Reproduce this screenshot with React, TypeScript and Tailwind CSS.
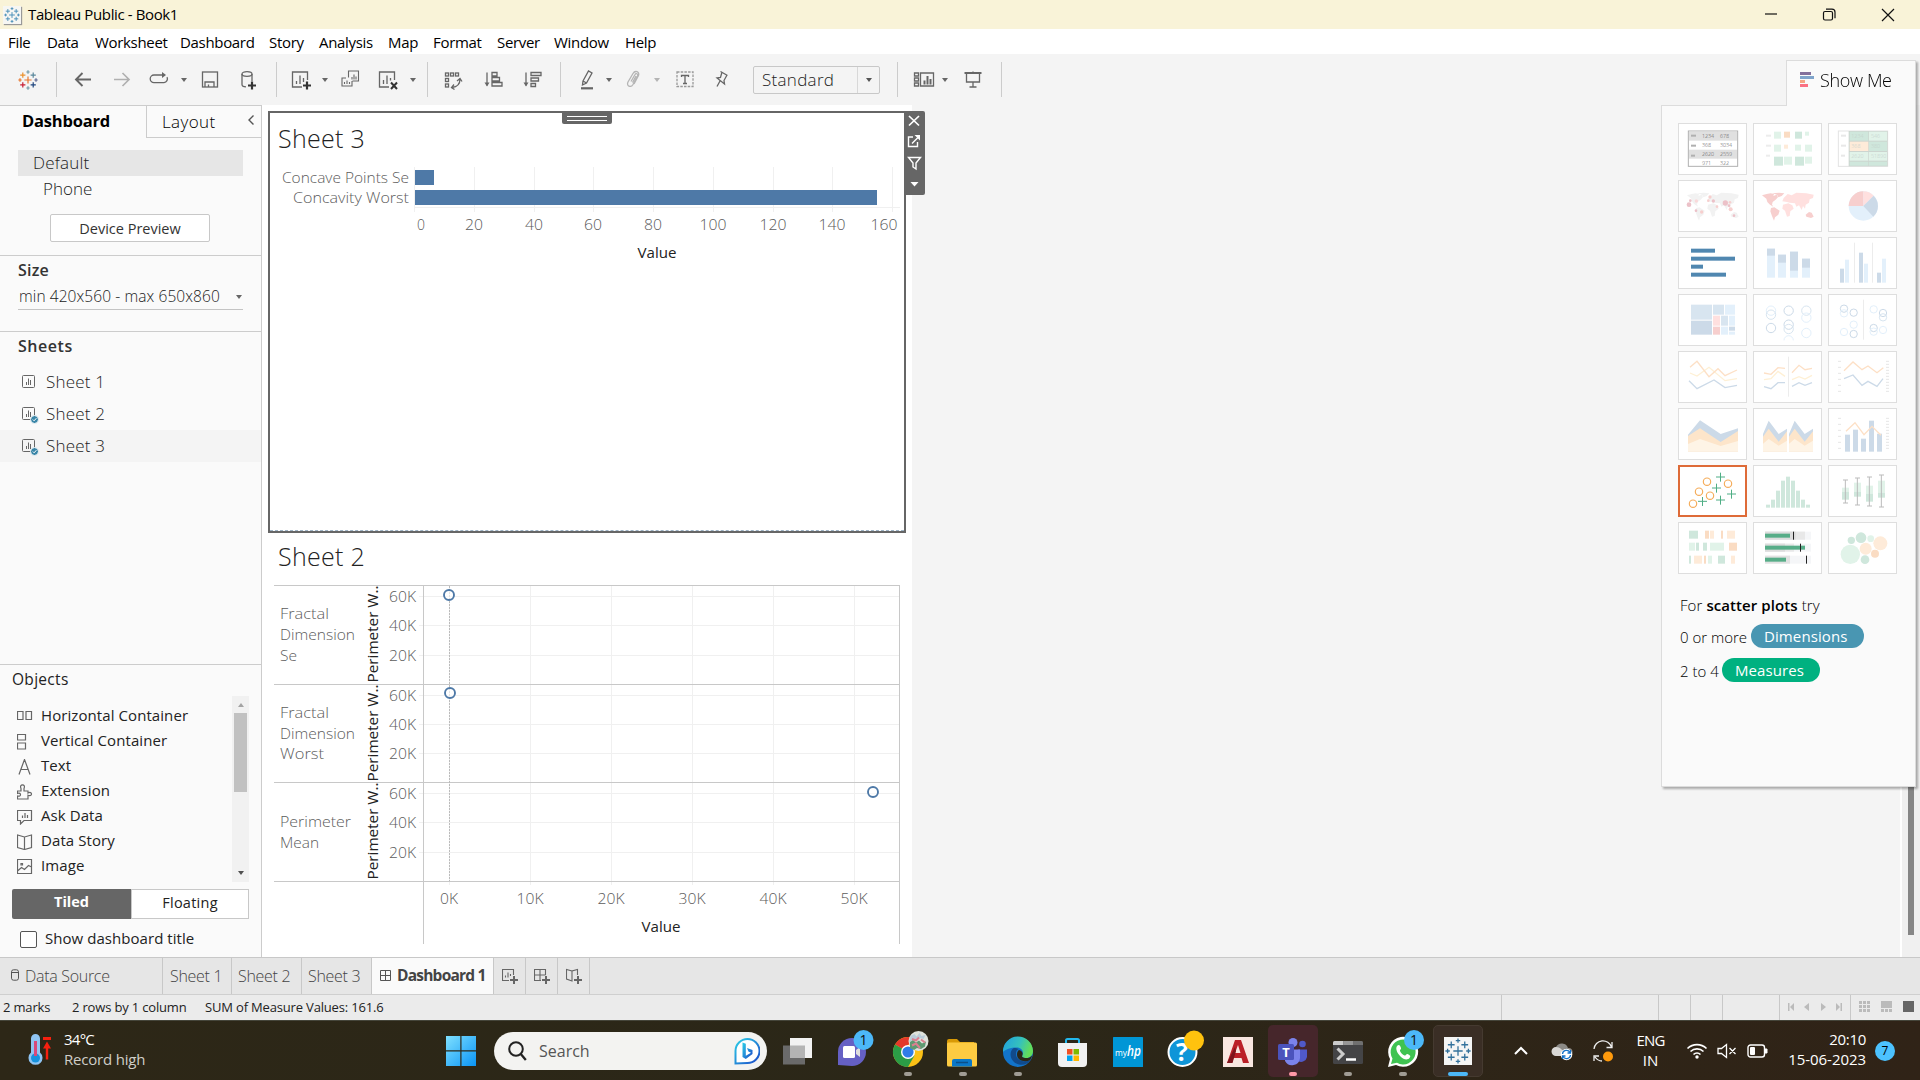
import React from "react";

type P = { children?: React.ReactNode; className?: string };

/* ---------- small shared pieces ---------- */

const Sep = ({ className = "" }: P) => <div className={"h-[35px] w-px shrink-0 bg-[#cccccc] " + className} />;

const Caret = ({ className = "" }: P) => (
  <svg className={"h-[4px] w-[6px] shrink-0 " + className} viewBox="0 0 6 4">
    <path d="M0 0h6L3 4z" fill="currentColor" />
  </svg>
);

const Ico = ({ w = 20, className = "", children }: P & { w?: number }) => (
  <svg
    width={w}
    height={20}
    viewBox={`0 0 ${w} 20`}
    className={"shrink-0 overflow-visible " + className}
    fill="none"
    stroke="#666"
    strokeWidth="1.3"
  >
    {children}
  </svg>
);

const crosses: [number, number, number, string][] = [
  [10, 10, 3.6, "#e8762c"],
  [4.8, 5.2, 2.6, "#eb912c"],
  [15.2, 5.2, 2.6, "#59879b"],
  [4.8, 14.8, 2.6, "#c72035"],
  [15.2, 14.8, 2.6, "#1f457e"],
  [10, 2, 1.7, "#7199a6"],
  [10, 18, 1.7, "#7199a6"],
  [2, 10, 1.7, "#e8762c"],
  [18, 10, 1.7, "#5b6591"],
];

const TableauMark = ({ size, color, className = "" }: { size: number; color?: string; className?: string }) => (
  <svg width={size} height={size} viewBox="0 0 20 20" className={"shrink-0 " + className}>
    {crosses.map(([x, y, r, c], i) => (
      <path key={i} d={`M${x - r} ${y}h${2 * r}M${x} ${y - r}v${2 * r}`} stroke={color || c} strokeWidth="1.2" />
    ))}
  </svg>
);

/* ---------- title, menu, toolbar ---------- */

const TitleBar = () => (
  <div className="flex h-[29px] items-center bg-[#f9f3d8] pl-[3px] font-['Open_Sans',sans-serif] text-[15px] text-black">
    <div className="flex h-[18px] w-[18px] items-center justify-center bg-[#f6f6f3] shadow-[1px_1px_1px_#999]">
      <TableauMark size={16} color="#4a8fb8" />
    </div>
    <span className="ml-[7px] pb-px tracking-[-0.38px]">Tableau Public - Book1</span>
    <svg className="ml-auto mr-[24px] h-[14px] w-[132px]" viewBox="0 0 132 14" fill="none" stroke="#111" strokeWidth="1.2">
      <path d="M1 6h12" />
      <rect x="59.500" y="3.500" width="9" height="8.500" rx="1.500" />
      <path d="M62 1.200h6a3 3 0 0 1 3 3v6" />
      <path d="M118 1l12 12M130 1l-12 12" />
    </svg>
  </div>
);

const MenuBar = () => (
  <div className="flex h-[25px] items-center bg-white pl-[8px] pt-[2px] font-['Open_Sans',sans-serif] text-[15px] tracking-[-0.32px] text-black">
    <span className="w-[39px]">File</span>
    <span className="w-[48px]">Data</span>
    <span className="w-[85px]">Worksheet</span>
    <span className="w-[89px]">Dashboard</span>
    <span className="w-[50px]">Story</span>
    <span className="w-[69px]">Analysis</span>
    <span className="w-[45px]">Map</span>
    <span className="w-[64px]">Format</span>
    <span className="w-[57px]">Server</span>
    <span className="w-[71px]">Window</span>
    <span>Help</span>
  </div>
);

const Toolbar = () => (
  <div className="flex h-[51px] items-center bg-[#f4f4f4] text-[#666]">
    <TableauMark size={20} className="ml-[18px]" />
    <Sep className="ml-[18px]" />
    <Ico w={18} className="ml-[17px]">
      <path d="M17 9.500H2M8.500 3L2 9.500l6.500 6.500" strokeWidth="1.9" />
    </Ico>
    <Ico w={18} className="ml-[21px]">
      <path d="M1 9.500h15M9.500 3L16 9.500l-6.500 6.500" strokeWidth="1.700" stroke="#b0b0b0" />
    </Ico>
    <Ico className="ml-[18px]">
      <path d="M14 5H5a3.800 3.800 0 0 0 0 7.600h10a3.800 3.800 0 0 0 3-5.500" />
      <path d="M13 2l4 3-4 3z" fill="#666" stroke="none" />
    </Ico>
    <Caret className="ml-[12px]" />
    <Ico w={18} className="ml-[14px]">
      <rect x="1.500" y="2" width="15" height="15" />
      <path d="M4 17v-5h9v5M7.500 17v-2.500" />
    </Ico>
    <Ico w={18} className="ml-[20px]">
      <ellipse cx="8" cy="4" rx="5" ry="2.300" />
      <path d="M3 4v10.500c0 1.500 2 2.300 4 2.400M13 4v7" />
      <path d="M9 15.500h8M13 11.500v8" stroke="#333" strokeWidth="2.200" />
    </Ico>
    <Sep className="ml-[19px]" />
    <Ico className="ml-[14px]">
      <path d="M16.500 10V2h-15v15H11M5.500 14v-3M9 14V5.500M12.500 12V8" />
      <path d="M12 15.500h8M16 11.500v8" stroke="#333" strokeWidth="2.200" />
    </Ico>
    <Caret className="ml-[11px]" />
    <Ico className="ml-[12px]">
      <path d="M8.500 7.500V1h10v10h-6M12 9.500V7M14 9.500V4.500M16 9.500V6.500M6 8H2v8h10v-5M4.500 14v-2M7 14v-3.500M9.500 14v-2" strokeWidth="1.100" />
    </Ico>
    <Ico className="ml-[18px]">
      <path d="M16.500 10V2h-15v15H11M5.500 14v-4M9 14V5.500M12.500 10.500V8" />
      <path d="M13 12.500l6 6.500M19 12.500L13 19" stroke="#333" strokeWidth="2" />
    </Ico>
    <Caret className="ml-[12px]" />
    <Sep className="ml-[11px]" />
    <Ico className="ml-[15px]">
      <rect x="2.500" y="3" width="3" height="3" />
      <rect x="7.500" y="3" width="3" height="3" />
      <rect x="12.500" y="3" width="3" height="3" />
      <rect x="2.500" y="8.500" width="3" height="3" />
      <rect x="2.500" y="14" width="3" height="3" />
      <path d="M17 9c0 5-3 8-8 8.500M14 11l3-2.500 2 3M11 14.500l-2.500 3 3 2" />
    </Ico>
    <Ico className="ml-[20px]">
      <path d="M4 2.500v13" />
      <path d="M1.500 12.500L4 16.500l2.500-4z" fill="#666" stroke="none" />
      <path d="M9 2.500h5V6H9zM9 7.500h7.500V11H9zM9 12.500h10V16H9z" />
    </Ico>
    <Ico className="ml-[19px]">
      <path d="M4 2.500v13" />
      <path d="M1.500 12.500L4 16.500l2.500-4z" fill="#666" stroke="none" />
      <path d="M9 2.500h10v3H9zM9 8h7.500v3H9zM9 13.500h4.500v3H9z" />
    </Ico>
    <Sep className="ml-[18px]" />
    <Ico w={14} className="ml-[19px]">
      <path d="M3 11l5.500-10L12 3l-5.500 10-4 2zM3 11l3.500 2" />
      <path d="M1 18.300h12" strokeWidth="2.200" />
    </Ico>
    <Caret className="ml-[12px]" />
    <Ico w={14} className="ml-[14px]">
      <path
        d="M5 11.500l4-7c1-2 3.500-.5 2.500 1.500L7 14.500c-2 3.500-7 1.500-5-2.500L7 3.500c2-3.500 7-2 5.500 2L8 14M6.500 12.500L10 6"
        stroke="#b4b4b4"
      />
    </Ico>
    <Caret className="ml-[14px] text-[#b4b4b4]" />
    <Ico w={18} className="ml-[16px]">
      <rect x="1" y="2" width="16" height="14.500" stroke="#999" strokeDasharray="2.500 1.200" />
      <path d="M5.500 7V5.500h7V7M9 5.500v8M7 13.500h4" />
    </Ico>
    <Ico w={14} className="ml-[21px]">
      <path d="M5.500 1.500l7 4M7 2L5.500 7.500 2 8l7.500 6L9 10.500 12 5M5 11l-3 5.500" />
    </Ico>
    <div className="ml-[24px] flex h-[28px] w-[127px] shrink-0 items-center rounded-[2px] border border-[#c8c8c8] pl-[8px] font-['Open_Sans',sans-serif] text-[17px] font-light text-[#222]">
      <span className="w-[95px] tracking-[0.3px]">Standard</span>
      <div className="flex h-full flex-1 items-center justify-center border-l border-[#d8d8d8]">
        <Caret className="text-[#555]" />
      </div>
    </div>
    <Sep className="ml-[17px]" />
    <Ico className="ml-[16px]">
      <path d="M.500 3h4v3h-4zM.500 8h4v3h-4zM.500 13h4v3h-4zM6.500 3h13v13h-13z" />
      <path d="M10.500 14.500v-4M13.500 14.500V6M16.500 14.500V9" strokeWidth="2" />
    </Ico>
    <Caret className="ml-[8px]" />
    <Ico w={18} className="ml-[16px]">
      <path d="M.500 3h17" strokeWidth="2" />
      <path d="M2.500 3.500V12h13V3.500M9 1.500v1M9 12v4.500M5.500 17h7" />
    </Ico>
    <Sep className="ml-[19px]" />
  </div>
);

/* ---------- left panel ---------- */

const SheetItem = ({ name, used, active }: { name: string; used?: boolean; active?: boolean }) => (
  <div className={"flex h-[32px] items-center pl-[22px] " + (active ? "bg-[#f4f4f4]" : "")}>
    <svg width="16" height="16" viewBox="0 0 16 16" fill="none" stroke="#666" className="overflow-visible">
      <rect x=".500" y="1.500" width="12" height="12" rx="1" />
      <path d="M4.500 11V8M6.500 11V4.500M8.500 11V6" />
      {used && (
        <>
          <circle cx="12.500" cy="13.500" r="4" fill="#3a86a8" stroke="#fafafa" />
          <path d="M10.800 13.500l1.300 1.300 2.300-2.600" stroke="#fff" />
        </>
      )}
    </svg>
    <span className="ml-[8px] text-[17px] font-light tracking-[0.2px]">{name}</span>
  </div>
);

const objects: [string, React.ReactNode][] = [
  ["Horizontal Container", <path d="M.500 2.500h5.500v8H.500zM9 2.500h5.500v8H9z" />],
  ["Vertical Container", <path d="M.500.500h8v5.500h-8zM.500 9h8v6h-8z" />],
  ["Text", <path d="M2 15.500L7.500.500 13 15.500M4 10.500h7" />],
  ["Extension", <path d="M.500 7h3.500V4.500C3 2 4 .800 5.500.800S8 2 7 4.500V7h4v2c2-1 3.500-.500 3.500 1s-1.500 2-3.500 1.200V15H.500v-3c2 .600 3-.200 3-1.300s-1-2-3-1.200z" />],
  ["Ask Data", <path d="M.500 1.500h14v10H7l-3.500 3.500v-3.500h-3zM5.500 9V6.500M8 9V4M10.500 9V6" />],
  ["Data Story", <path d="M7.500 3L.500 1v12.500l7 2 7-2V1zM7.500 3v12.500" />],
  ["Image", <path d="M.500.500h14v14H.500zM.500 12l4-3.500 3 2 4-4 3 1.500M4 4.500h1.500V6H4z" />],
];

const LeftPanel = () => (
  <aside className="flex w-[262px] shrink-0 flex-col border-r border-t border-[#cccccc] bg-[#fafafa] font-['Open_Sans',sans-serif] text-[#222]">
    <div className="flex h-[32px] text-[17px] text-black">
      <div className="w-[146px] pl-[22px] pt-[2px] text-[16.500px] font-bold leading-[25px] tracking-[-0.2px]">Dashboard</div>
      <div className="flex flex-1 items-center border-b border-l border-[#cccccc] pl-[15px] font-light">
        <span className="tracking-[0.4px]">Layout</span>
        <svg className="mb-[3px] ml-auto mr-[7px] h-[10px] w-[6px]" viewBox="0 0 6 10" fill="none" stroke="#555" strokeWidth="1.400">
          <path d="M5.500.500L1 5l4.500 4.500" />
        </svg>
      </div>
    </div>
    <div className="mx-[18px] mt-[12px] flex h-[26px] items-center bg-[#e6e6e6] pl-[15px] text-[17px] font-light tracking-[0.2px]">Default</div>
    <div className="flex h-[26px] items-center pl-[43px] text-[17px] font-light">Phone</div>
    <div className="ml-[50px] mt-[12px] flex h-[28px] w-[160px] items-center justify-center rounded-[2px] border border-[#c8c8c8] bg-white pt-px text-[14.500px] text-[#333]">
      Device Preview
    </div>
    <div className="mt-[13px] h-[76px] border-t border-[#cccccc] px-[18px]">
      <div className="mt-[2px] text-[16px] font-semibold leading-[24px] tracking-[0.2px] text-[#333]">Size</div>
      <div className="mt-[2px] flex h-[26px] items-center border-b border-[#c4c4c4] pl-px text-[15.500px] font-light tracking-[0.09px]">
        min 420x560 - max 650x860
        <Caret className="ml-auto mr-[1px] text-[#666]" />
      </div>
    </div>
    <div className="flex-1 border-t border-[#cccccc]">
      <div className="ml-[18px] mt-[2px] text-[16px] font-semibold leading-[24px] tracking-[0.55px] text-[#333]">Sheets</div>
      <div className="mt-[8px]">
        <SheetItem name="Sheet 1" />
        <SheetItem name="Sheet 2" used />
        <SheetItem name="Sheet 3" used active />
      </div>
    </div>
    <div className="h-[293px] border-t border-[#cccccc]">
      <div className="ml-[12px] mt-[2px] text-[15.500px] leading-[24px] tracking-[0.3px] text-[#222]">Objects</div>
      <div className="mt-[5px] flex h-[186px] pl-[17px] pr-[12px]">
        <div className="flex-1 pt-[7px]">
          {objects.map(([n, icon]) => (
            <div key={n} className="flex h-[25px] items-center text-[15px] tracking-[0.08px] text-[#222]">
              <svg width="16" height="16" viewBox="0 0 16 16" fill="none" stroke="#666" strokeWidth="1.200" className="relative top-px">
                {icon}
              </svg>
              <span className="ml-[8px]">{n}</span>
            </div>
          ))}
        </div>
        <div className="flex w-[17px] flex-col items-center bg-[#f1f1f1]">
          <Caret className="mt-[7px] rotate-180 text-[#a3a3a3]" />
          <div className="mt-[6px] h-[79px] w-[13px] bg-[#c1c1c1]" />
          <Caret className="mb-[7px] mt-auto text-[#505050]" />
        </div>
      </div>
      <div className="ml-[12px] mt-[7px] flex h-[30px] w-[237px] text-center text-[14.500px] leading-[26px]">
        <div className="w-[119px] rounded-l-[2px] bg-[#666] font-bold text-white">Tiled</div>
        <div className="flex-1 border border-[#c8c8c8] bg-white tracking-[0.25px] text-[#222]">Floating</div>
      </div>
      <div className="ml-[20px] mt-[10px] flex items-center text-[15px] leading-[18px] text-[#222]">
        <div className="mr-[8px] h-[17px] w-[17px] rounded-[2px] border border-[#555] bg-white" />
        <span className="pb-[2px] tracking-[0.05px]">Show dashboard title</span>
      </div>
    </div>
  </aside>
);

/* ---------- dashboard canvas ---------- */

const Txt = ({
  x, y, w, s = 15, fill = "#5c5c5c", anchor = "middle", weight = 300, children,
}: {
  x: number; y: number; w: number; s?: number; fill?: string; anchor?: "start" | "middle" | "end"; weight?: number; children: string;
}) => (
  <text
    x={x}
    y={y}
    fontSize={s}
    fill={fill}
    textAnchor={anchor}
    fontWeight={weight}
    textLength={w}
    lengthAdjust="spacingAndGlyphs"
    fontFamily="'Open Sans', sans-serif"
  >
    {children}
  </text>
);

const barTicks: [string, number, number, number][] = [
  ["0", 414.5, 421, 8],
  ["20", 474.5, 474, 18],
  ["40", 534.5, 534, 18],
  ["60", 593.5, 593, 18],
  ["80", 653.5, 653, 18],
  ["100", 713.5, 713, 27],
  ["120", 773.5, 773, 27],
  ["140", 832.5, 832, 27],
  ["160", 892.5, 884, 27],
];

const BarChart = () => (
  <svg width="634" height="110" viewBox="270 160 634 110" className="block">
    {barTicks.map(([t, gx, tx, w]) => (
      <g key={t}>
        <path d={`M${gx} 167v45`} stroke="#f0f0f0" />
        <Txt x={tx} y={230} w={w}>{t}</Txt>
      </g>
    ))}
    <path d="M415 207.500h485" stroke="#f0f0f0" />
    <path d="M415 170h19v15h-19zM415 190h462v15H415z" fill="#4e79a7" />
    <Txt x={409} y={183} w={127} anchor="end">Concave Points Se</Txt>
    <Txt x={409} y={203} w={116} anchor="end">Concavity Worst</Txt>
    <Txt x={657} y={258} w={39} weight={400} fill="#222">Value</Txt>
  </svg>
);

const rows = [
  { top: 585.5, grid: [596.5, 625.5, 655.5], lines: ["Fractal", "Dimension", "Se"], ys: [619, 640, 661], ws: [49, 75, 17], dot: [448.5, 595] },
  { top: 684.5, grid: [695.5, 724.5, 753.5], lines: ["Fractal", "Dimension", "Worst"], ys: [718, 739, 759], ws: [49, 75, 44], dot: [449.5, 693] },
  { top: 782.5, grid: [793.5, 822.5, 852.5], lines: ["Perimeter", "Mean"], ys: [827, 848], ws: [71, 39], dot: [872.5, 792] },
];

const ScatterChart = () => (
  <svg width="640" height="370" viewBox="270 580 640 370" className="block">
    {[449.5, 530.5, 611.5, 692.5, 773.5, 854.5].map((x, i) => (
      <g key={x}>
        <path d={`M${x} 586v299`} stroke="#f0f0f0" />
        <Txt x={x - 0.5} y={904} w={i ? 27 : 18}>{(i ? i * 10 : 0) + "K"}</Txt>
      </g>
    ))}
    {rows.map((r) => (
      <g key={r.top}>
        {r.grid.map((y, i) => (
          <g key={y}>
            <path d={`M419 ${y}h480`} stroke="#f0f0f0" />
            <Txt x={416} y={y + 5.5} w={27} anchor="end">{["60K", "40K", "20K"][i]}</Txt>
          </g>
        ))}
        {r.lines.map((l, i) => (
          <Txt key={l} x={280} y={r.ys[i]} w={r.ws[i]} anchor="start">{l}</Txt>
        ))}
        <g transform={`translate(377.500 ${r.top + 97}) rotate(-90)`}>
          <Txt x={0} y={0} w={97} anchor="start" weight={400} fill="#222">Perimeter W..</Txt>
        </g>
        <path d={`M274 ${r.top}h626`} stroke="#c8c8c8" />
      </g>
    ))}
    <path d="M449.500 586v295" stroke="#bbb" strokeDasharray="2 1" />
    <path d="M274 881.500h626M423.500 585v359M899.500 585v359" stroke="#c8c8c8" />
    {rows.map((r) => (
      <circle key={r.top} cx={r.dot[0] + 0.5} cy={r.dot[1]} r="5" fill="#fff" fillOpacity=".6" stroke="#4e79a7" strokeWidth="1.900" />
    ))}
    <Txt x={661} y={932} w={39} weight={400} fill="#222">Value</Txt>
  </svg>
);

const SheetTitle = ({ children, className = "" }: P) => (
  <div className={"font-['Open_Sans',sans-serif] text-[25px] font-light leading-[34px] text-[#222] " + className}>{children}</div>
);

const Canvas = () => (
  <main className="w-[650px] shrink-0 bg-white pl-[6px] pt-[6px]">
    <section className="relative h-[422px] w-[638px] border-2 border-[#666]">
      <SheetTitle className="pl-[8px] pt-[8px] tracking-[0.3px]">Sheet 3</SheetTitle>
      <div className="mt-[5px]">
        <BarChart />
      </div>
      <div className="absolute bottom-0 left-0 right-0 border-b border-dashed border-[#9fb4c6]" />
      <div className="absolute left-[292px] top-0 flex h-[11px] w-[50px] flex-col gap-[3px] rounded-b-[2px] bg-[#666] px-[5px] pt-[3px]">
        <div className="h-px bg-white" />
        <div className="h-px bg-white" />
      </div>
      <svg className="absolute -top-[2px] left-[634px] h-[84px] w-[21px] rounded-r-[2px] bg-[#666]" viewBox="0 0 21 84" fill="none" stroke="#fff" strokeWidth="1.400">
        <path d="M5 5l10 9.500M15 5L5 14.500" strokeWidth="1.700" />
        <path d="M9 26H4.500v9.500h9V31M8 32.500l6-6" />
        <path d="M10.500 24H16v5.500z" fill="#fff" stroke="none" />
        <path d="M4.500 46.500h12l-4.500 5.500v6l-3-2v-4z" />
        <path d="M6.500 71h8l-4 4.500z" fill="#fff" stroke="none" />
      </svg>
    </section>
    <section className="pl-[2px]">
      <SheetTitle className="pl-[8px] pt-[6px] tracking-[0.3px]">Sheet 2</SheetTitle>
      <div className="mt-[7px]">
        <ScatterChart />
      </div>
    </section>
  </main>
);

/* ---------- Show Me gallery ---------- */

const G1 = "#cfe7dc", G2 = "#e1f3e9", O1 = "#fadcc3", O2 = "#feebd9", B1 = "#ccdae8", B2 = "#e3f0fb", B3 = "#d8e5f0", R1 = "#f7cfce", R2 = "#ffe0df", YL = "#fef0d5";

const R = ({ d }: { d: [number, number, number, number, string][] }) => (
  <>
    {d.map(([x, y, w, h, c], i) => (
      <rect key={i} x={x} y={y} width={w} height={h} fill={c} />
    ))}
  </>
);
const C = ({ d, sw }: { d: [number, number, number, string][]; sw?: number }) => (
  <>
    {d.map(([x, y, r, c], i) => (
      <circle key={i} cx={x} cy={y} r={r} fill={sw ? "none" : c} stroke={sw ? c : "none"} strokeWidth={sw} />
    ))}
  </>
);
const L = ({ p, c, sw = 4 }: { p: string; c: string; sw?: number }) => <polyline points={p} fill="none" stroke={c} strokeWidth={sw} />;

const Tiny = ({ x, y, c, t }: { x: number; y: number; c: string; t: string }) => (
  <text x={x} y={y} fontSize="16" fill={c} fontFamily="'Open Sans', sans-serif">{t}</text>
);

const Land = ({ a, b }: { a: string; b: string }) => (
  <>
    <path
      fill={a}
      d="M27 46l14-4 12-2 10 2-2 6 10-4 4 8-8 8-8 6-2 8 4 6-10-6-8-8-3-10zM58 40l20-2 16 2-8 8-10 4-4-8zM54 84l10-2 16 10-4 12-10 8-3 10-6-14-5-14zM158 104l10-8 8 2 6 12-8 4-14-4z"
    />
    <path
      fill={b}
      d="M88 64l4-10 12-12 12 4 14-8 30 2 22 4-2 10-10 4-2 10-10 6-2 12-6-8-4 12-8-14-8 4-4-10-16-2-8-2zM90 74l16-4 12 6 4 10-10 8-2 14-8 2-6-18-8-6z"
    />
  </>
);

const areas = (dx: number, k: number) => (
  <g transform={`translate(${dx} 0)`}>
    <path d={k ? "M30 78L47 38l30 40 25-16v69H30z" : "M30 80l36-43 62 41 52-17v70H30z"} fill={B1} />
    <path d={k ? "M30 86l17-24 30 39 25-31v61H30z" : "M30 84l36-23 62 41 52-33v62H30z"} fill="#fde5ca" />
    <path d={k ? "M30 107l17-14 30 20 25-15v33H30z" : "M30 108l36-15 62 21 52-15v32H30z"} fill="#fef4e6" />
  </g>
);

const ticks = (x: number, step: number) =>
  Array.from({ length: 90 / step + 1 }, (_, i) => <path key={i} d={`M${x} ${31 + i * step}h9`} stroke="#e6e6e6" strokeWidth="3" />);

const thumbs: React.ReactNode[] = [
  <>
    <rect x="31" y="24" width="148" height="106" fill="#fff" stroke="#b0b0b0" strokeWidth="3" />
    <R d={[[33, 26, 144, 27, "#e0e0e0"], [33, 80, 144, 27, "#e0e0e0"], [39, 35, 15, 6, "#b0b0b0"], [39, 65, 15, 6, "#b0b0b0"], [39, 95, 12, 6, "#b0b0b0"]]} />
    {[["1234", "678"], ["368", "3034"], ["2620", "2559"], ["971", "322"]].map(([a, b], i) => (
      <g key={a}>
        <Tiny x={72} y={45 + i * 26.500} c="#555" t={a} />
        <Tiny x={126} y={45 + i * 26.500} c="#555" t={b} />
      </g>
    ))}
  </>,
  <R d={[[39, 35, 15, 6, "#ececec"], [39, 65, 15, 6, "#ececec"], [39, 95, 12, 6, "#ececec"], [63, 26, 21, 21, G2], [93, 26, 18, 18, O1], [126, 26, 21, 21, G1], [156, 26, 12, 12, G2], [63, 65, 21, 21, G2], [93, 65, 12, 12, O2], [126, 65, 18, 18, G2], [156, 65, 21, 21, G2], [63, 101, 27, 27, G1], [93, 101, 24, 24, G2], [126, 101, 27, 27, G1], [156, 101, 21, 21, G2]]} />,
  <>
    <rect x="31" y="24" width="148" height="106" fill="#fff" stroke="#e3e3e3" strokeWidth="3" />
    <R d={[[62, 24, 117, 106, "#ccd5d0"], [65, 26, 56, 27, G1], [123, 26, 54, 27, G2], [65, 56, 56, 28, O2], [123, 56, 54, 28, G1], [65, 87, 56, 26, G2], [123, 87, 54, 26, G2], [65, 116, 56, 12, G1], [123, 116, 54, 12, G1], [39, 35, 15, 6, "#e8e8e8"], [39, 65, 15, 6, "#e8e8e8"], [39, 95, 12, 6, "#e8e8e8"]]} />
    {[["1234", "546"], ["368", "380"], ["2620", "51890"]].map(([a, b], i) => (
      <g key={a}>
        <Tiny x={70} y={45 + i * 30} c="#c3cfc9" t={a} />
        <Tiny x={129} y={45 + i * 30} c="#c3cfc9" t={b} />
      </g>
    ))}
  </>,
  <>
    <Land a="#f2f2f2" b="#f2f2f2" />
    <C d={[[33, 74, 7, "#ecc1c8"], [37, 62, 4, "#ecc1c8"], [55, 63, 5, "#fad9da"], [96, 51, 5, R1], [91, 62, 4, R1], [106, 63, 5, "#ecc1c8"], [117, 80, 4, R1], [142, 69, 8, "#ecc1c8"], [156, 67, 4, R1], [153, 77, 4, "#ecc1c8"], [158, 88, 6, R1], [54, 92, 4, "#ecc1c8"], [71, 96, 5, R1], [168, 107, 4, "#ecc1c8"]]} />
  </>,
  <Land a={R1} b={R2} />,
  <>
    <circle cx="106" cy="78" r="44" fill={B2} />
    <path d="M106 78H62a44 44 0 0 1 44-44z" fill={R1} />
    <path d="M106 78V34a44 44 0 0 1 31 13z" fill={R2} />
    <path d="M106 78l31-31a44 44 0 0 1-1 63z" fill={B1} />
  </>,
  <R d={[[39, 35, 72, 12, "#5087b0"], [39, 59, 132, 12, "#5087b0"], [39, 83, 36, 12, "#5087b0"], [39, 107, 105, 12, "#5087b0"]]} />,
  <R d={[[42, 35, 24, 87, B2], [42, 35, 24, 21, B1], [75, 53, 24, 69, B2], [75, 53, 24, 24, B1], [111, 44, 24, 78, B2], [111, 44, 24, 57, B1], [147, 65, 24, 57, B2], [147, 65, 24, 27, B1]]} />,
  <R d={[[36, 95, 12, 42, B1], [51, 68, 12, 69, B2], [78, 17, 3, 120, "#ececec"], [93, 47, 12, 90, B1], [108, 80, 12, 57, B2], [132, 17, 3, 120, "#ececec"], [147, 107, 12, 30, B1], [162, 65, 12, 72, B2]]} />,
  <R d={[[39, 32, 63, 45, B3], [39, 80, 63, 42, B1], [105, 32, 33, 30, B3], [141, 32, 30, 30, B2], [105, 65, 21, 30, R2], [129, 65, 21, 30, B3], [153, 65, 18, 30, B2], [105, 98, 21, 24, R1], [129, 98, 21, 24, B2], [153, 98, 18, 12, B1], [153, 113, 18, 9, B2]]} />,
  <>
    <C sw={3} d={[[54, 50, 14, B2], [54, 62, 14, B3], [54, 102, 14, B1], [107, 50, 14, B1], [107, 92, 14, B1], [107, 105, 14, B3], [160, 50, 14, B3], [160, 71, 14, B2], [160, 117, 14, B2]]} />
    <path d="M93 139a14 14 0 0 1 28 0" fill="none" stroke={B2} strokeWidth="3" />
  </>,
  <>
    <C sw={3} d={[[48, 44, 11, B1], [48, 58, 11, B2], [77, 56, 11, B1], [77, 92, 11, B2], [48, 114, 11, B2], [77, 120, 11, B1], [137, 46, 11, B2], [165, 57, 11, B1], [165, 70, 11, B3], [137, 102, 11, B1], [137, 113, 11, B2], [165, 108, 11, B2]]} />
    <R d={[[105, 17, 3, 120, "#ececec"]]} />
  </>,
  <>
    <L c={YL} p="36,66 57,75 93,49 141,89 177,83" />
    <L c="#fde0c6" p="36,49 57,31 93,77 120,53 141,74 177,57" />
    <L c={B1} p="33,89 57,113 108,87 141,110 177,103" />
  </>,
  <>
    <L c="#fde0c6" p="33,66 54,70 75,50 96,52" />
    <L c={YL} p="33,86 54,83 75,61 96,76" />
    <L c={B1} p="33,107 54,113 75,95 96,95" />
    <R d={[[105, 17, 3, 120, "#ececec"]]} />
    <L c="#fde0c6" p="117,65 138,43 156,56 177,52" />
    <L c={YL} p="117,86 138,77 156,84 177,73" />
    <L c={B1} p="117,106 138,95 156,103 177,95" />
  </>,
  <>
    {ticks(30, 18)}
    {ticks(174, 9)}
    <L c="#fde0c6" p="48,59 75,33 102,56 120,45 147,65 166,50" />
    <L c={B1} p="48,83 75,72 102,103 120,91 147,106 165,83" />
  </>,
  areas(0, 0),
  <>
    {areas(0, 1)}
    {areas(78, 1)}
  </>,
  <>
    {ticks(30, 18)}
    {ticks(174, 9)}
    <R d={[[51, 80, 15, 51, B1], [75, 65, 15, 66, B1], [99, 92, 15, 39, B1], [123, 38, 15, 93, B1], [147, 77, 15, 54, B1]]} />
    <L c="#fde0c6" p="54,70 81,44 108,80 132,55 159,82" />
  </>,
  <>
    <C sw={3.5} d={[[87, 50, 11, "#f5ad5b"], [150, 56, 11, "#f5ad5b"], [63, 80, 11, "#f5ad5b"], [96, 92, 11, "#f5ad5b"], [45, 116, 11, "#f5ad5b"]]} />
    <path d="M114 36h27M127.500 23v27M102 69h27M115.500 56v27M147 87h27M160.500 74v27M60 109h27M73.500 96v27M114 105h27M127.500 92v27" stroke="#4fae85" strokeWidth="3" />
  </>,
  <R d={[119, 104, 77, 47, 35, 47, 77, 104, 119].map((t, i) => [39 + i * 15, t, 12, 128 - t, G1] as [number, number, number, number, string])} />,
  <>
    {[[52, 45, 68, 80, 104, 114], [88, 39, 53, 80, 95, 120], [124, 36, 62, 86, 110, 123], [160, 30, 47, 83, 98, 126]].map(([x, a, b, c, d, e]) => (
      <g key={x}>
        <R d={[[x - 10, b, 21, c - b, G2], [x - 10, c, 21, d - c, G1]]} />
        <path d={`M${x} ${a}V${e}M${x - 7} ${a}h15M${x - 7} ${e}h15`} stroke="#bbb" strokeWidth="3" />
      </g>
    ))}
  </>,
  <R d={[[33, 26, 27, 24, G1], [81, 26, 12, 24, O1], [96, 26, 12, 24, O2], [129, 26, 6, 24, O1], [147, 26, 24, 24, O2], [33, 62, 18, 24, G2], [54, 62, 9, 24, G1], [75, 62, 12, 24, G1], [96, 62, 42, 24, G2], [153, 62, 24, 24, O1], [33, 101, 6, 24, G1], [48, 101, 24, 24, O2], [78, 101, 6, 24, O1], [90, 101, 12, 24, G2], [120, 101, 21, 24, G1], [159, 101, 12, 24, O2]]} />,
  <R d={[[36, 29, 138, 24, "#f5f6f8"], [36, 29, 120, 24, "#e8e8e8"], [36, 29, 92, 24, "#dcdcdc"], [36, 35, 75, 12, "#57ad88"], [120, 29, 3, 24, "#222"], [36, 65, 138, 24, "#f5f6f8"], [36, 65, 87, 24, "#e8e8e8"], [36, 65, 60, 24, "#dcdcdc"], [36, 71, 120, 12, "#57ad88"], [141, 65, 3, 24, "#222"], [36, 101, 138, 24, "#f5f6f8"], [36, 101, 75, 24, "#e2e2e2"], [36, 107, 63, 12, "#57ad88"], [159, 101, 3, 24, "#222"]]} />,
  <C d={[[67, 97, 29, G2], [70, 55, 11, G1], [99, 47, 16, G1], [128, 50, 10, G2], [157, 64, 21, O2], [113, 80, 18, O2], [141, 95, 12, O1], [111, 113, 13, G1]]} />,
];

const ShowMe = () => (
  <div className="absolute left-[1661px] top-[60px] flex h-[727px] w-[255px] flex-col items-end font-['Open_Sans',sans-serif] text-black drop-shadow-[2px_2px_1px_rgba(0,0,0,0.3)]">
    <div className="z-10 -mb-px flex h-[46px] w-[130px] items-center border border-b-0 border-[#dcdcdc] bg-[#fafafa] pb-[7px] pl-[13px]">
      <svg width="14" height="16" viewBox="0 0 14 16">
        <path d="M0 0h11v3H0z" fill="#83709c" />
        <path d="M0 4h14v3H0z" fill="#7fa4cb" />
        <path d="M0 8h5v3H0z" fill="#f4a683" />
        <path d="M0 12h8v3H0z" fill="#fb7183" />
      </svg>
      <span className="ml-[6px] text-[18px] font-light tracking-[-0.35px]">Show Me</span>
    </div>
    <div className="w-full flex-1 border border-[#dcdcdc] bg-[#fafafa] pl-[16px] pt-[17px] text-[15px] font-light">
      <div className="grid w-[219px] grid-cols-3 gap-x-[6px] gap-y-[5px]">
        {thumbs.map((t, i) => (
          <div
            key={i}
            className={"flex h-[52px] w-[69px] items-center justify-center bg-white " + (i === 18 ? "border-2 border-[#de6b38]" : "border border-[#dedede]")}
          >
            <svg width="69" height="52" viewBox="0 0 207 156" className="shrink-0">
              {t}
            </svg>
          </div>
        ))}
      </div>
      <div className="ml-[2px] mt-[19px] leading-[24px] tracking-[0.08px]">
        For <b className="font-semibold">scatter plots</b> try
      </div>
      <div className="ml-[2px] mt-[7px] flex h-[24px] items-center">
        <span className="w-[71px] pt-[2px]">0 or more</span>
        <span className="h-[24px] w-[113px] rounded-full bg-[#4996b2] pl-[13px] font-normal leading-[24px] tracking-[0.1px] text-white">Dimensions</span>
      </div>
      <div className="ml-[2px] mt-[10px] flex h-[24px] items-center">
        <span className="w-[42px] pt-[2px]">2 to 4</span>
        <span className="h-[24px] w-[98px] rounded-full bg-[#00b180] pl-[13px] font-normal leading-[24px] tracking-[0.1px] text-white">Measures</span>
      </div>
    </div>
  </div>
);

/* ---------- bottom tabs and status ---------- */

const AddTab = ({ children }: P) => (
  <div className="flex w-[32px] items-center justify-center border-r border-[#c8c8c8]">
    <svg width="16" height="18" viewBox="0 0 16 18" fill="none" stroke="#666" strokeWidth="1.100">
      {children}
      <path d="M8 13h8M12 9v8" strokeWidth="2" />
    </svg>
  </div>
);

const SheetTabs = () => (
  <div className="flex h-[37px] border-t border-[#c8c8c8] bg-[#e6e6e6] font-['Open_Sans',sans-serif] text-[16px] font-light tracking-[-0.3px] text-[#444]">
    <div className="flex w-[163px] items-center border-r border-[#c8c8c8] pl-[11px]">
      <svg width="8" height="12" viewBox="0 0 8 12" fill="none" stroke="#555" className="mb-[2px]">
        <rect x=".500" y=".800" width="7" height="10.400" rx="2" />
        <path d="M.500 3.500h7" />
      </svg>
      <span className="ml-[6px]">Data Source</span>
    </div>
    <div className="flex w-[69px] items-center border-r border-[#c8c8c8] pl-[7px]">Sheet 1</div>
    <div className="flex w-[70px] items-center border-r border-[#c8c8c8] pl-[6px]">Sheet 2</div>
    <div className="flex w-[70px] items-center border-r border-[#c8c8c8] pl-[6px]">Sheet 3</div>
    <div className="flex w-[122px] items-center border-r border-[#c8c8c8] bg-[#fafafa] pl-[8px]">
      <svg width="11" height="11" viewBox="0 0 11 11" fill="none" stroke="#555" className="mb-[2px]">
        <path d="M.500.500h10v10H.500zM5.500.500v10M.500 5.500h10" />
      </svg>
      <span className="ml-[6px] pb-px text-[15.500px] font-bold tracking-[-0.78px]">Dashboard 1</span>
    </div>
    <AddTab>
      <path d="M11.500 8V2.500H.500v11H7M3.500 10.500v-2M6 10.500V5.500M8.500 9V7" />
    </AddTab>
    <AddTab>
      <path d="M11.500 8V2.500H.500v11H7M6 2.500v11M.500 8h11" />
    </AddTab>
    <AddTab>
      <path d="M6 4L.500 2.500v9.500L6 14V4l5.500-1.500V8" />
    </AddTab>
  </div>
);

const StatusBar = () => (
  <div className="flex h-[26px] items-stretch border-t border-[#cfcfcf] bg-[#ebebeb] font-['Open_Sans',sans-serif] text-[13px] leading-[24px] tracking-[-0.17px] text-[#222]">
    <span className="w-[69px] pl-[3px]">2 marks</span>
    <span className="w-[133px] pl-[3px]">2 rows by 1 column</span>
    <span className="pl-[3px]">SUM of Measure Values: 161.6</span>
    <div className="ml-auto w-[157px] border-l border-[#c8c8c8]" />
    <div className="w-[32px] border-l border-[#c8c8c8]" />
    <div className="w-[32px] border-l border-[#c8c8c8]" />
    <div className="w-[57px] border-l border-[#c8c8c8]" />
    <div className="w-[71px] border-l border-[#c8c8c8] pl-[7px] pt-[8px]">
      <svg width="56" height="8" viewBox="0 0 56 8" fill="#bbb" className="block">
        <path d="M1 0h1.500v8H1zM7 0v8L3 4zM22 0v8l-5-4zM34 0v8l5-4zM49 0v8l4-4zM53.500 0H55v8h-1.500z" />
      </svg>
    </div>
    <div className="w-[70px] border-l border-[#c8c8c8] pl-[8px] pt-[6px]">
      <svg width="56" height="11" viewBox="0 0 56 11" fill="#bbb" className="block">
        <path d="M0 0h3v3H0zM4 0h3v3H4zM8 0h3v3H8zM0 4h3v3H0zM4 4h3v3H4zM8 4h3v3H8zM0 8h3v3H0zM4 8h3v3H4zM8 8h3v3H8zM22 0h11v7H22zM22 8h3v3h-3zM26 8h3v3h-3zM30 8h3v3h-3z" />
        <path d="M44 0h11v11H44z" fill="#666" />
      </svg>
    </div>
  </div>
);

/* ---------- Windows taskbar ---------- */

const App32 = ({ children, run, className = "", wide }: P & { run?: string; wide?: boolean }) => (
  <div className={"relative flex h-[52px] w-[50px] shrink-0 items-center justify-center rounded-[5px] " + className}>
    <svg width="40" height="40" viewBox="0 0 40 40" className="overflow-visible">
      {children}
      {run && <rect x={wide ? 10 : 16} y="41" width={wide ? 20 : 8} height="4" rx="2" fill={run} />}
    </svg>
  </div>
);

const Taskbar = () => (
  <div className="flex h-[60px] items-center border-t border-[#45453a] bg-gradient-to-r from-[#2d2717] via-[#2b2718] to-[#302317] font-['Open_Sans',sans-serif] text-white">
    <svg width="24" height="36" viewBox="0 0 24 36" className="ml-[28px] shrink-0">
      <path d="M3 5.500a4.500 4.500 0 0 1 9 0v14a7 7 0 1 1-9 0z" fill="#8fc4f2" />
      <circle cx="7.500" cy="25" r="4.500" fill="#1592dd" />
      <path d="M6 8h3v15H6z" fill="#d8497a" />
      <path d="M15 4h8v3h-8zM19 8.500l4 7h-2.800v11h-2.400v-11H15z" fill="#f7200f" />
    </svg>
    <div className="ml-[12px] w-[150px] pb-[3px] text-[15px] leading-[20px]">
      <div className="tracking-[-0.75px]">34°C</div>
      <div className="tracking-[-0.2px] text-[#d0cec8]">Record high</div>
    </div>
    <svg width="30" height="30" viewBox="0 0 30 30" className="ml-[232px] shrink-0">
      <defs>
        <linearGradient id="win" x1="0" y1="0" x2="1" y2="1">
          <stop offset="0" stopColor="#7fe0ff" />
          <stop offset="1" stopColor="#0a94f5" />
        </linearGradient>
      </defs>
      <path d="M0 0h14.300v14.300H0zM15.500 0H30v14.300H15.500zM0 15.500h14.300V30H0zM15.500 15.500H30V30H15.500z" fill="url(#win)" />
    </svg>
    <div className="ml-[18px] flex h-[38px] w-[273px] shrink-0 items-center rounded-full bg-[#f3f3f1] pl-[14px] pr-[7px] text-[16px] text-[#555]">
      <svg width="19" height="20" viewBox="0 0 19 20" fill="none" stroke="#222" strokeWidth="2">
        <circle cx="8" cy="8" r="6.800" />
        <path d="M12.800 13l5 6" strokeWidth="2.300" />
      </svg>
      <span className="ml-[12px]">Search</span>
      <svg width="26" height="28" viewBox="0 0 26 28" className="ml-auto">
        <defs>
          <linearGradient id="bing" x1="0" y1="0" x2="1" y2="1">
            <stop offset="0" stopColor="#2cd0e8" />
            <stop offset="1" stopColor="#1b48c8" />
          </linearGradient>
        </defs>
        <path d="M1.500 26.500V14a12 12 0 1 1 12 12z" fill="#fff" stroke="url(#bing)" strokeWidth="2" />
        <path d="M8.500 5.500l3.300 1.200v12l5.200-2.900-2.600-1.300-1.400-3.600 5.500 2.200v4L11.800 22l-3.300-2z" fill="url(#bing)" />
      </svg>
    </div>
    <div className="ml-[6px] flex gap-[5px]">
      <App32>
        <rect x="5" y="14.500" width="22" height="19" fill="#6a6a6a" />
        <rect x="12" y="7" width="22" height="20" fill="#f2f2f2" />
        <rect x="12" y="14.500" width="15" height="12.500" fill="#b4b4b4" />
      </App32>
      <App32>
        <path d="M5 34V21a14 14 0 1 1 14 14z" fill="#6560c4" />
        <rect x="10" y="15" width="12" height="12" rx="1.500" fill="#fff" />
        <path d="M23 19l4-3v10l-4-3z" fill="#ddd" />
        <circle cx="30.500" cy="9" r="10" fill="#4cb8f8" />
        <text x="30.500" y="14" fontSize="14" textAnchor="middle" fill="#111">1</text>
      </App32>
      <App32 run="#a09c94">
        <circle cx="20" cy="21" r="15" fill="#fbc116" />
        <path d="M20 21L7 13.500A15 15 0 0 1 33 13.500H20z" fill="#e3382b" />
        <path d="M7 13.500A15 15 0 0 0 20 36l6.500-11.500L20 21z" fill="#2b9c46" />
        <circle cx="20" cy="21" r="7" fill="#fff" />
        <circle cx="20" cy="21" r="5.600" fill="#2f7ce8" />
        <circle cx="30.500" cy="10" r="10" fill="#dfe3dc" />
        <path d="M22.500 5l4-2 2 2.500 3-3.500 2 3 4-1-2 4-4-1-3 3-4-1-3 2z" fill="#b9ccd8" />
        <path d="M22 11l3-2 3 2.500 3-2 3 3 4-2-1 5-4 2.500-4-1-3 2-4-2z" fill="#5f9a72" />
        <path d="M24 8l4 1.500 3-3M24 14.500l4-2 4 4.500M33 8.500l4 3" stroke="#dc7f90" strokeWidth="2" fill="none" />
      </App32>
      <App32 run="#a09c94">
        <path d="M4 10a2 2 0 0 1 2-2h8l3 3h14v8H4z" fill="#d99a06" />
        <rect x="4" y="11.500" width="30" height="24" rx="1.500" fill="#fdcb42" />
        <path d="M9 35.500V30a2 2 0 0 1 2-2h16a2 2 0 0 1 2 2v5.500z" fill="#0a78c8" />
        <path d="M13 31.500h12" stroke="#0b4f88" strokeWidth="1.500" />
      </App32>
      <App32 run="#a09c94">
        <defs>
          <linearGradient id="edge" x1="0" y1="0" x2="1" y2=".3">
            <stop offset="0" stopColor="#1f9fe0" />
            <stop offset=".6" stopColor="#35c1bd" />
            <stop offset="1" stopColor="#62dd5a" />
          </linearGradient>
        </defs>
        <circle cx="20" cy="21" r="15" fill="#1274ca" />
        <path d="M5 21a15 15 0 0 1 30-1c0 5-3.500 7.500-8 7-3-.400-3.500-1.500-2.500-3 1.500-3-.5-7.500-6-7.500-6 0-11 2-13.500 4.500z" fill="url(#edge)" />
        <path d="M15 17.500c-5 5-2 14 6 16 5 1.200 9-1 12-4.500-7 3-15 .500-15-6 0-2.500 1-4 2.500-5-2-1-4-1.200-5.500-.500z" fill="#114a8b" />
        <path d="M24.500 24c-1 1.500-.5 2.600 2.500 3 3 .3 5.500-.6 7-2.500-.3 2-1 3.500-2 4.800-6 2.200-13 .2-13-5.800 0-2 .8-3.600 2-4.500 3 .5 4.200 3 3.500 5z" fill="#2c2718" />
      </App32>
      <App32>
        <path d="M13 13V9.500c0-1 .5-1.500 1.500-1.500h10c1 0 1.500.500 1.500 1.500V13" fill="none" stroke="#22b8ee" strokeWidth="2" />
        <path d="M5 12h29v20a4 4 0 0 1-4 4H9a4 4 0 0 1-4-4z" fill="#f1f1f1" />
        <path d="M14 18h5.500v5.500H14z" fill="#f25022" />
        <path d="M20.500 18H26v5.500h-5.500z" fill="#7fba00" />
        <path d="M14 24.500h5.500V30H14z" fill="#00a4ef" />
        <path d="M20.500 24.500H26V30h-5.500z" fill="#ffb900" />
      </App32>
      <App32>
        <rect x="5" y="6" width="30" height="30" fill="#0096d6" rx=".5" />
        <text x="7" y="24.500" fontSize="9" fill="#fff" textLength="12" lengthAdjust="spacingAndGlyphs" fontFamily="Open Sans, sans-serif">my</text>
        <text x="19" y="25" fontSize="14" fontWeight="600" fontStyle="italic" fill="#fff" textLength="14" lengthAdjust="spacingAndGlyphs" fontFamily="Open Sans, sans-serif">hp</text>
      </App32>
      <App32>
        <circle cx="19.500" cy="21" r="14" fill="#0e95d8" stroke="#fff" strokeWidth="2" />
        <text x="19" y="30" fontSize="25" fontWeight="700" textAnchor="middle" fill="#fff" fontFamily="Open Sans, sans-serif">?</text>
        <circle cx="31" cy="9.500" r="10" fill="#ffc20e" />
      </App32>
      <App32>
        <rect x="5" y="6" width="30" height="30" fill="#f9e7e1" />
        <path d="M9 32l8-23h6l8 23h-6l-1.500-5h-8L14 32zM17 22h5.500L20 14z" fill="#bb2028" fillRule="evenodd" />
        <path d="M9 32l8-16 1 4-3.500 12z" fill="#7e141c" />
      </App32>
      <App32 className="bg-[#46262b]" run="#ff98a6">
        <circle cx="20" cy="11.500" r="4.500" fill="#7b83eb" />
        <circle cx="29.500" cy="13" r="3.300" fill="#5059c9" />
        <path d="M25 18.500h9v7.500a6 6 0 0 1-9 4z" fill="#5059c9" />
        <path d="M12 18.500h15V27a8 8 0 0 1-15 3z" fill="#7b83eb" />
        <rect x="5" y="13" width="16" height="16" rx="1.500" fill="#4b53bc" />
        <text x="13" y="26" fontSize="13" fontWeight="700" textAnchor="middle" fill="#fff" fontFamily="Open Sans, sans-serif">T</text>
      </App32>
      <App32 run="#a09c94">
        <rect x="5" y="10" width="30" height="23" rx="1.500" fill="#444446" />
        <path d="M5 14v-2.500A1.500 1.500 0 0 1 6.500 10h9v4z" fill="#ccc" />
        <path d="M15.500 10h10v4h-10z" fill="#979797" />
        <path d="M25.500 10H33.500A1.500 1.500 0 0 1 35 11.500V14h-9.500z" fill="#707070" />
        <path d="M9.500 17.500l5.500 5.500-5.500 5.500" stroke="#ccc" strokeWidth="3" fill="none" />
        <path d="M18 28.500h10" stroke="#fff" strokeWidth="2.500" />
      </App32>
      <App32 run="#a09c94">
        <path d="M5 36l2-8a15 15 0 1 1 6 6z" fill="#fff" />
        <path d="M8 33l1.500-5.500a12.500 12.500 0 1 1 4.500 4.300z" fill="#3fc351" />
        <path d="M14 15c2-2 3-1 4 2 .5 1-1.500 2-1 3 1 2 2.500 3.500 4.500 4.500 1 .5 2-2 3-1.500 3 1.500 3.500 2 2 4-2 2.500-6 1.500-9-1.500s-5.500-7.500-3.500-10.500z" fill="#fff" />
        <circle cx="31" cy="9" r="10" fill="#4cb8f8" />
        <text x="31" y="14" fontSize="14" textAnchor="middle" fill="#111">1</text>
      </App32>
      <App32 className="border border-[#453a30] bg-[#3a2e25]" run="#4cb8f8" wide>
        <rect x="6" y="6" width="28" height="28" fill="#f5f5f5" />
        <svg x="7" y="7" width="26" height="26" viewBox="0 0 20 20">
          {crosses.map(([x, y, r], i) => (
            <path key={i} d={`M${x - r} ${y}h${2 * r}M${x} ${y - r}v${2 * r}`} stroke="#33719c" strokeWidth="1" />
          ))}
        </svg>
      </App32>
    </div>
    <svg width="14" height="9" viewBox="0 0 14 9" fill="none" stroke="#fff" strokeWidth="2" className="ml-auto shrink-0">
      <path d="M1 8l6-6 6 6" />
    </svg>
    <svg width="22" height="20" viewBox="0 0 22 20" className="ml-[23px] shrink-0">
      <path d="M5 15a5 5 0 0 1 0-9 6.500 6.500 0 0 1 12 1 4 4 0 0 1 1 8z" fill="#8c8a86" />
      <path d="M5 15a4.500 4.500 0 0 1 0-9c4 0 7 3 10 9z" fill="#d9d8d5" />
      <circle cx="15.500" cy="13.500" r="5.800" fill="#fff" />
      <path d="M11.500 13a4 4 0 0 1 7.500-1.500M19.500 14a4 4 0 0 1-7.500 1.500M19.500 9v3h-3M11.500 18v-3h3" stroke="#1672c8" strokeWidth="1.300" fill="none" />
    </svg>
    <svg width="22" height="22" viewBox="0 0 22 22" fill="none" stroke="#eee" strokeWidth="1.300" className="ml-[19px] shrink-0">
      <path d="M2 9a9 9 0 0 1 17.500-2M20 2v5.500h-5.500M2 21v-5h5M3 17a9 9 0 0 0 7 4" />
      <circle cx="16" cy="16.500" r="5" fill="#ff9a0c" stroke="none" />
    </svg>
    <div className="ml-[20px] w-[33px] pb-[2px] text-center text-[15px] leading-[20px]">
      <div className="tracking-[-0.9px]">ENG</div>
      <div>IN</div>
    </div>
    <svg width="22" height="18" viewBox="0 0 22 18" fill="none" stroke="#fff" strokeWidth="1.600" className="ml-[19px] shrink-0">
      <path d="M1.500 6.500a13.500 13.500 0 0 1 19 0M4.500 9.500a9.300 9.300 0 0 1 13 0M7.500 12.500a5 5 0 0 1 7 0" />
      <circle cx="11" cy="15" r="1.700" fill="#fff" stroke="none" />
    </svg>
    <svg width="20" height="16" viewBox="0 0 20 16" fill="none" stroke="#fff" strokeWidth="1.300" className="ml-[9px] shrink-0">
      <path d="M1 5.500h3.500L9.500 1.500v13l-5-4H1zM12.500 5l6 6M18.500 5l-6 6" />
    </svg>
    <svg width="21" height="14" viewBox="0 0 21 14" fill="none" stroke="#fff" strokeWidth="1.400" className="ml-[10px] shrink-0">
      <rect x="1" y="1" width="16.500" height="12" rx="2.500" />
      <path d="M18 5h2v4h-2z" fill="#fff" strokeWidth="1" />
      <rect x="3" y="3" width="5" height="8" rx="1" fill="#fff" stroke="none" />
    </svg>
    <div className="ml-[14px] w-[84px] whitespace-nowrap pb-[3px] text-right text-[15px] leading-[20px]">
      <div className="tracking-[-0.3px]">20:10</div>
      <div className="tracking-[-0.05px]">15-06-2023</div>
    </div>
    <div className="ml-[9px] mr-[25px] flex h-[20px] w-[20px] shrink-0 items-center justify-center rounded-full bg-[#4cc2ff] text-[12px] text-black">7</div>
  </div>
);

export default function App() {
  return (
    <div className="relative flex h-[1080px] w-[1920px] flex-col overflow-hidden bg-[#f4f4f4]">
      <TitleBar />
      <MenuBar />
      <Toolbar />
      <div className="flex min-h-0 flex-1">
        <LeftPanel />
        <Canvas />
        <div className="ml-auto w-[20px] border-l-2 border-white bg-[#f0f0f0] pl-[6px]">
          <div className="h-[830px] w-[6px] bg-[#868686]" />
        </div>
      </div>
      <SheetTabs />
      <StatusBar />
      <Taskbar />
      <ShowMe />
    </div>
  );
}
